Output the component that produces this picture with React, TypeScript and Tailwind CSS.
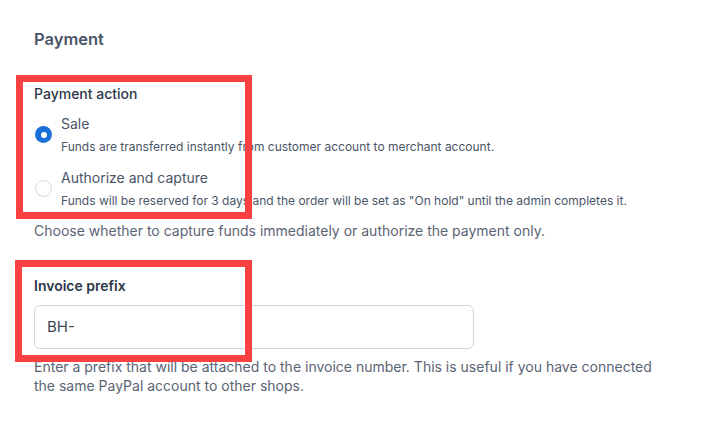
import React from "react";

const options = [
  {
    label: "Sale",
    description: "Funds are transferred instantly from customer account to merchant account.",
    checked: true,
  },
  {
    label: "Authorize and capture",
    description:
      'Funds will be reserved for 3 days and the order will be set as "On hold" until the admin completes it.',
    checked: false,
  },
];

const App: React.FC = () => {
  return (
    <div
      className="relative w-[722px] h-[446px] bg-white text-[#4a5568]"
      style={{ fontFamily: "Inter, 'Noto Sans', sans-serif" }}
    >
      <div className="pl-[34px] pt-[29px]">
        <h2 className="text-[16.5px] leading-[20px] font-semibold text-[#4a5568]">Payment</h2>

        {/* Payment action */}
        <div className="mt-[37px]">
          <div className="text-[14px] leading-[16px] font-medium text-[#2d3748]">Payment action</div>
          <div className="mt-[13px] flex flex-col gap-[14px]">
            {options.map((opt) => (
              <label key={opt.label} className="flex items-start gap-[9px]">
                {opt.checked ? (
                  <span className="mt-[11px] ml-[1px] flex h-[17px] w-[17px] items-center justify-center rounded-full bg-[#1b6fd8]">
                    <span className="h-[6px] w-[6px] rounded-full bg-white" />
                  </span>
                ) : (
                  <span className="mt-[11px] ml-[1px] h-[17px] w-[17px] rounded-full border border-[#d1d5db] bg-white" />
                )}
                <span className="flex flex-col">
                  <span className="text-[14px] leading-[18px] text-[#4a5568]">{opt.label}</span>
                  <span className="mt-[6px] text-[12px] leading-[16px] text-[#4a5568]">{opt.description}</span>
                </span>
              </label>
            ))}
          </div>
          <p className="mt-[12px] text-[14px] leading-[20px] text-[#5a6474]">
            Choose whether to capture funds immediately or authorize the payment only.
          </p>
        </div>

        {/* Invoice prefix */}
        <div className="mt-[37px]">
          <div className="text-[14px] leading-[16px] font-semibold text-[#2d3748]">Invoice prefix</div>
          <div className="mt-[11px] flex h-[44px] w-[440px] items-center rounded-[6px] border border-[#cfd5dd] px-[12px] text-[15px] text-[#3d4756]">
            BH-
          </div>
          <p className="mt-[8px] w-[640px] text-[14px] leading-[19px] text-[#5a6474]">
            Enter a prefix that will be attached to the invoice number. This is useful if you have connected the
            same PayPal account to other shops.
          </p>
        </div>
      </div>

      {/* annotation boxes */}
      <div className="pointer-events-none absolute left-[16px] top-[75px] h-[144px] w-[236px] border-[7px] border-[#f94141]" />
      <div className="pointer-events-none absolute left-[15px] top-[260px] h-[102px] w-[237px] border-[7px] border-[#f94141]" />
    </div>
  );
};

export default App;
